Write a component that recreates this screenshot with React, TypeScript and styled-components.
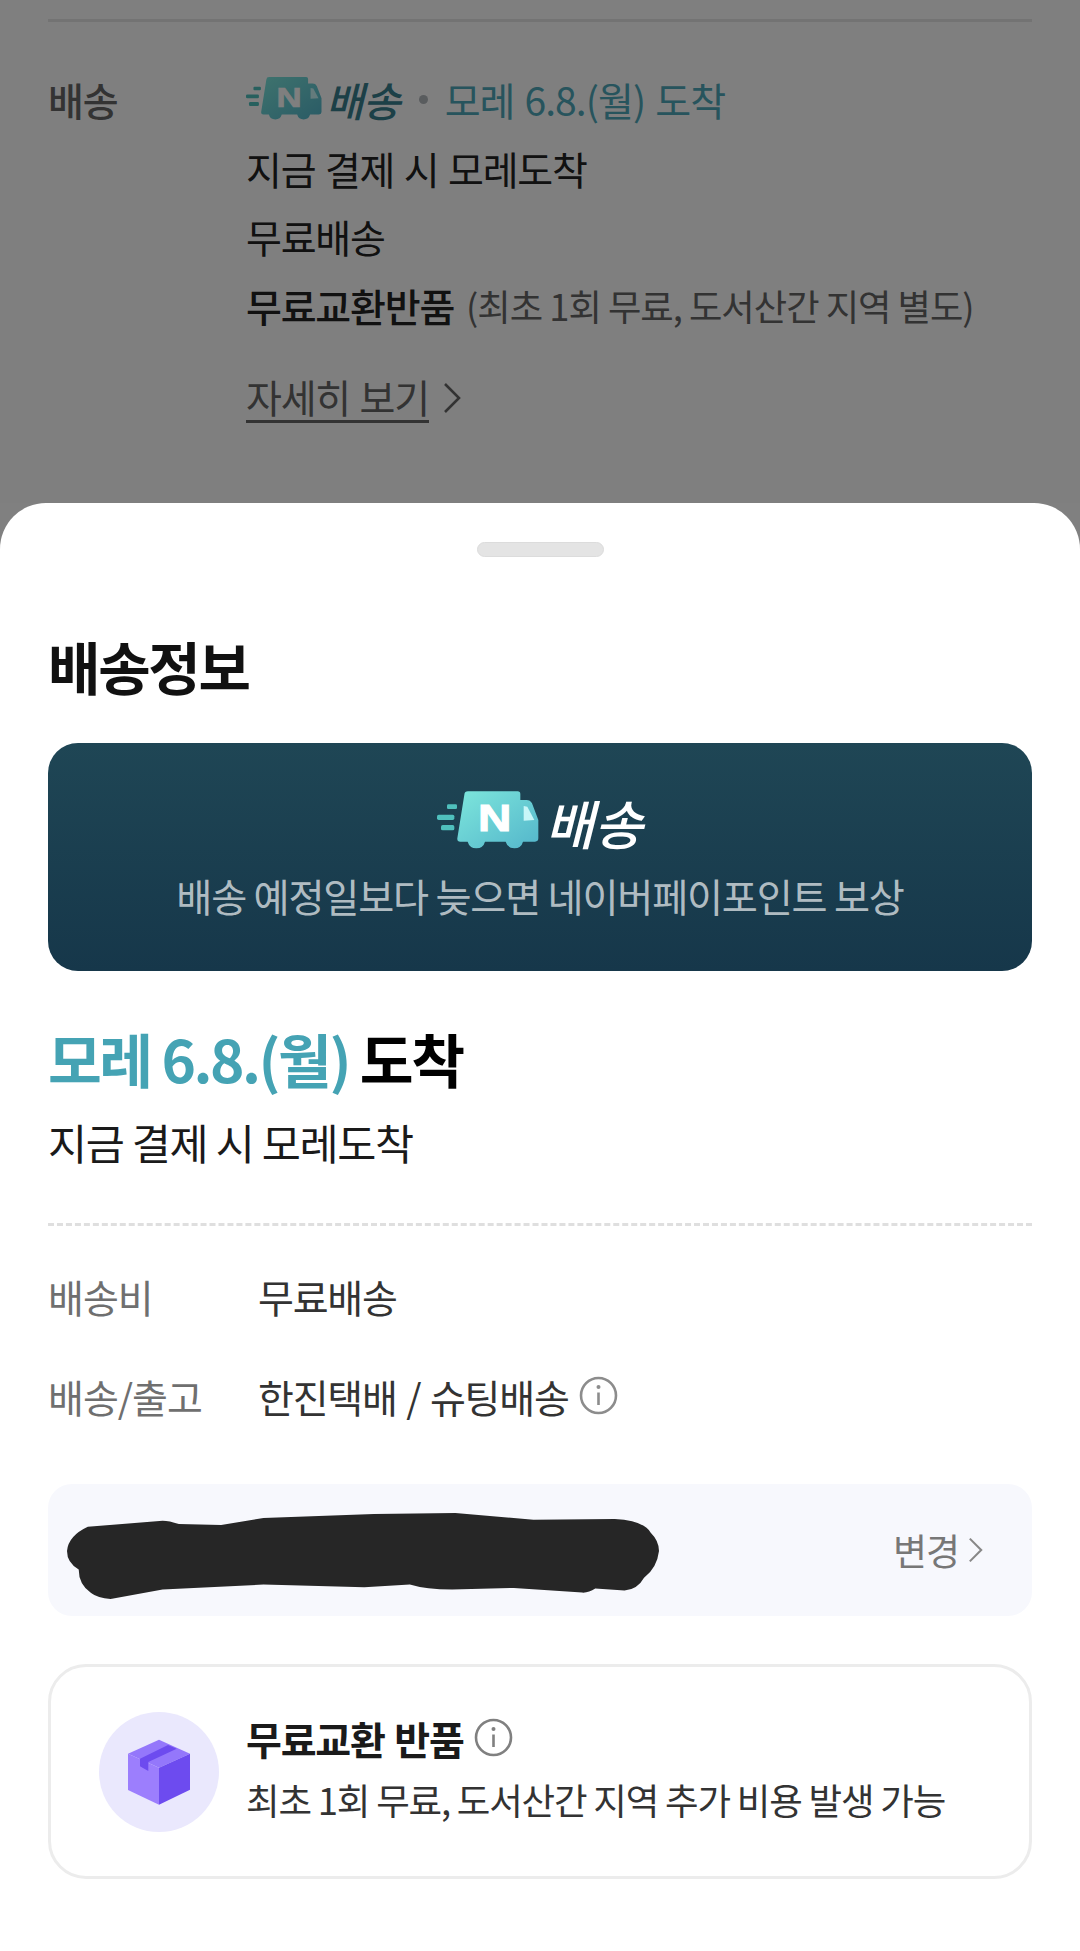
import { createGlobalStyle, styled } from "styled-components";

const Global = createGlobalStyle`
  html, body {
    margin: 0;
    padding: 0;
    background: #808080;
  }

  * {
    box-sizing: border-box;
  }

  body {
    font-family: "Noto Sans CJK KR", "Noto Sans", sans-serif;
  }
`;

const Page = styled.div`
  width: 1080px;
  height: 1951px;
  overflow: hidden;
  background: #808080;
`;

const Behind = styled.section`
  position: relative;
  height: 503px;
  margin-bottom: -46px;
  padding: 19px 48px 0;
  background: #fff;

  &::after {
    content: "";
    position: absolute;
    inset: 0;
    background: rgba(0, 0, 0, 0.5);
  }
`;

const TopRule = styled.div`
  height: 3px;
  background: #e6e6e6;
`;

const InfoRow = styled.div`
  display: grid;
  grid-template-columns: 198px 1fr;
  padding-top: 43px;
`;

const RowLabel = styled.div`
  font-size: 39px;
  line-height: 68.6px;
  font-weight: 500;
  letter-spacing: -1.2px;
  color: #666;
`;

const Line = styled.div<{ $tone?: string; $tight?: boolean }>`
  display: flex;
  align-items: center;
  height: 68.6px;
  font-size: 39px;
  letter-spacing: ${(p) => (p.$tight ? "-0.9px" : "-1.2px")};
  word-spacing: 2px;
  white-space: nowrap;
  color: ${(p) => p.$tone ?? "#222"};
`;

const LogoWord = styled.span`
  margin-left: 4px;
  font-size: 41px;
  font-style: italic;
  font-weight: 500;
  color: #38808f;
`;

const Dot = styled.span`
  width: 9px;
  height: 9px;
  margin: 0 17px 0 19px;
  border-radius: 50%;
  background: #b3b8bd;
`;

const Strong = styled.span`
  font-weight: 500;
`;

const Note = styled.span`
  margin-left: 12px;
  font-size: 36.3px;
  letter-spacing: -1px;
  word-spacing: 0;
  color: #666;
`;

const DetailLink = styled.div`
  display: flex;
  align-items: center;
  gap: 14px;
  margin-top: 34px;
  font-size: 39px;
  letter-spacing: -1.2px;
  word-spacing: 2px;
  color: #666;
`;

const Underlined = styled.span`
  line-height: 47px;
  border-bottom: 3px solid #666;
`;

const Sheet = styled.section`
  position: relative;
  z-index: 1;
  height: 1448px;
  margin-top: 46px;
  padding: 39px 48px 0;
  background: #fff;
  border-radius: 46px 46px 0 0;
`;

const Handle = styled.div`
  width: 127px;
  height: 15px;
  margin: 0 auto;
  border: 1px solid #dcdcdc;
  border-radius: 8px;
  background: #e4e4e4;
`;

const Title = styled.h1`
  margin: 70px 0 0;
  font-size: 57px;
  line-height: 76px;
  font-weight: 700;
  letter-spacing: -2.3px;
  color: #111;
`;

const Banner = styled.div`
  display: flex;
  flex-direction: column;
  align-items: center;
  height: 228px;
  margin-top: 40px;
  padding-top: 48px;
  border-radius: 30px;
  background: linear-gradient(180deg, #1f4655 0%, #16374a 100%);
`;

const BannerLogo = styled.div`
  display: flex;
  align-items: center;
  gap: 6px;
  height: 62px;
`;

const BannerWord = styled.span`
  font-size: 53px;
  line-height: 62px;
  font-style: italic;
  font-weight: 500;
  color: #fff;
`;

const BannerText = styled.div`
  margin-top: 16px;
  font-size: 39.2px;
  line-height: 52px;
  letter-spacing: -1.2px;
  color: rgba(255, 255, 255, 0.68);
`;

const Arrival = styled.div`
  margin-top: 47px;
  font-size: 58.5px;
  line-height: 80px;
  font-weight: 700;
  letter-spacing: -2.5px;
  color: #000;
`;

const ArrivalDate = styled.span`
  color: #45a3b4;
`;

const ArrivalNote = styled.div`
  margin-top: 15px;
  font-size: 42.5px;
  line-height: 58px;
  letter-spacing: -1.3px;
  color: #1a1a1a;
`;

const Dashed = styled.div`
  margin-top: 52px;
  border-top: 3px dashed #dfdfdf;
`;

const Specs = styled.dl`
  display: grid;
  grid-template-columns: 211px 1fr;
  grid-auto-rows: 100px;
  margin: 20px 0 0;
  align-items: center;
`;

const SpecName = styled.dt`
  font-size: 39px;
  letter-spacing: -1px;
  color: #6f6f6f;
`;

const SpecValue = styled.dd`
  display: flex;
  align-items: center;
  gap: 10px;
  margin: -1px 0 0 -1px;
  font-size: 39px;
  letter-spacing: -1.2px;
  word-spacing: 2px;
  color: #333;
`;

const Address = styled.div`
  display: flex;
  align-items: center;
  justify-content: space-between;
  height: 132px;
  margin-top: 38px;
  padding: 0 49px 0 19px;
  border-radius: 24px;
  background: #f7f8fd;
`;

const ScribbleMark = styled.svg`
  display: block;
  margin-top: 12px;
`;

const Change = styled.div`
  display: flex;
  align-items: center;
  gap: 9px;
  font-size: 37px;
  letter-spacing: -1px;
  color: #777;
`;

const ReturnCard = styled.div`
  display: flex;
  align-items: center;
  gap: 27px;
  height: 215px;
  margin-top: 48px;
  padding-left: 48px;
  border: 3px solid #ececec;
  border-radius: 38px;
`;

const ReturnBody = styled.div`
  padding-bottom: 7px;
`;

const ReturnTitle = styled.div`
  display: flex;
  align-items: center;
  gap: 10px;
  font-size: 39px;
  line-height: 54px;
  font-weight: 700;
  letter-spacing: -1.2px;
  word-spacing: 2px;
  color: #1a1a1a;
`;

const ReturnText = styled.div`
  margin-top: 9px;
  font-size: 36.5px;
  line-height: 52px;
  letter-spacing: -1.2px;
  color: #333;
`;

function Truck({ id, width }: { id: string; width: number }) {
  return (
    <svg width={width} viewBox="108 60 306 190" style={{ display: "block", flex: "none" }}>
      <defs>
        <linearGradient id={id} x1="0" y1="0" x2="1" y2="1">
          <stop offset="0" stopColor="#7de6dc" />
          <stop offset="1" stopColor="#54b6cb" />
        </linearGradient>
      </defs>
      <rect x="138" y="103" width="30" height="14" rx="4" fill="#4fc0bd" />
      <rect x="108" y="134" width="52" height="16" rx="5" fill="#4fc0bd" />
      <rect x="120" y="165" width="40" height="16" rx="5" fill="#4fc0bd" />
      <path
        d="M190 74Q191 64 201 64L350 64Q358 64 358 72L358 90L376 90Q388 90 393 100L412 150L412 205Q412 215 402 215L366 215A27 27 0 0 1 314 215L252 215A27 27 0 0 1 200 215L178 215Q168 215 169 205Z"
        fill={`url(#${id})`}
      />
      <path d="M368 108L379 110L400 150L368 152Z" fill="#c8f6f8" />
      <text
        x="281"
        y="184"
        textAnchor="middle"
        fontFamily="'Liberation Sans', sans-serif"
        fontWeight="700"
        fontSize="110"
        textLength="100"
        lengthAdjust="spacingAndGlyphs"
        stroke="#fff"
        strokeWidth="3"
        fill="#fff"
      >
        N
      </text>
    </svg>
  );
}

function InfoIcon({ color }: { color: string }) {
  return (
    <svg width="39" height="39" viewBox="0 0 39 39" fill="none" style={{ flex: "none" }}>
      <circle cx="19.5" cy="19.5" r="17.5" stroke={color} strokeWidth="2.6" />
      <circle cx="19.5" cy="11" r="2" fill={color} />
      <line x1="19.5" y1="16.5" x2="19.5" y2="29" stroke={color} strokeWidth="2.6" />
    </svg>
  );
}

function Chevron({ width, height, color }: { width: number; height: number; color: string }) {
  return (
    <svg width={width} height={height} viewBox="0 0 18 32" fill="none" style={{ flex: "none" }}>
      <polyline points="2,2 16,16 2,30" stroke={color} strokeWidth="2.6" />
    </svg>
  );
}

function Scribble() {
  return (
    <ScribbleMark width="592" height="86" viewBox="58 157 910 256" preserveAspectRatio="none">
      <path
        d="M58 270Q60 225 90 198L205 180Q215 180 230 190L295 193L360 172L530 160L655 157L775 177L900 175Q945 180 955 215Q968 240 968 270Q965 320 945 350Q935 385 915 388L870 382Q860 395 850 394L745 380L650 385Q610 385 585 370L515 378L360 370L205 385L125 413Q105 410 95 395Q76 370 76 325Q58 305 58 270Z"
        fill="#262626"
      />
    </ScribbleMark>
  );
}

function BoxIcon() {
  return (
    <svg width="120" height="120" viewBox="0 0 120 120" style={{ display: "block", flex: "none" }}>
      <circle cx="60" cy="60" r="60" fill="#eae8fd" />
      <path d="M60 27.7L91 41.7L60 55.7L29 41.7Z" fill="#9477fb" />
      <path d="M29 41.7L60 55.7L60 92.7L29 78Z" fill="#9c7efd" />
      <path d="M91 41.7L60 55.7L60 92.7L91 77.7Z" fill="#6d4bef" />
      <path d="M41 46.7L69 33L77.7 36.7L49.3 50L49.3 59L44 56L41 54.3Z" fill="#6d4bef" />
    </svg>
  );
}

export default function App() {
  return (
    <Page>
      <Global />

      <Behind>
        <TopRule />

        <InfoRow>
          <RowLabel>배송</RowLabel>

          <div>
            <Line $tone="#4fa9ba" $tight>
              <Truck id="truck-small" width={76} />
              <LogoWord>배송</LogoWord>
              <Dot />
              모레 6.8.(월) 도착
            </Line>
            <Line>지금 결제 시 모레도착</Line>
            <Line>무료배송</Line>
            <Line>
              <Strong>무료교환반품</Strong>
              <Note>(최초 1회 무료, 도서산간 지역 별도)</Note>
            </Line>

            <DetailLink>
              <Underlined>자세히 보기</Underlined>
              <Chevron width={18} height={32} color="#666" />
            </DetailLink>
          </div>
        </InfoRow>
      </Behind>

      <Sheet>
        <Handle />

        <Title>배송정보</Title>

        <Banner>
          <BannerLogo>
            <Truck id="truck-large" width={102} />
            <BannerWord>배송</BannerWord>
          </BannerLogo>
          <BannerText>배송 예정일보다 늦으면 네이버페이포인트 보상</BannerText>
        </Banner>

        <Arrival>
          <ArrivalDate>모레 6.8.(월)</ArrivalDate> 도착
        </Arrival>
        <ArrivalNote>지금 결제 시 모레도착</ArrivalNote>

        <Dashed />

        <Specs>
          <SpecName>배송비</SpecName>
          <SpecValue>무료배송</SpecValue>
          <SpecName>배송/출고</SpecName>
          <SpecValue>
            한진택배 / 슈팅배송
            <InfoIcon color="#8c8c8c" />
          </SpecValue>
        </Specs>

        <Address>
          <Scribble />
          <Change>
            변경
            <Chevron width={15} height={26} color="#888" />
          </Change>
        </Address>

        <ReturnCard>
          <BoxIcon />
          <ReturnBody>
            <ReturnTitle>
              무료교환 반품
              <InfoIcon color="#808080" />
            </ReturnTitle>
            <ReturnText>최초 1회 무료, 도서산간 지역 추가 비용 발생 가능</ReturnText>
          </ReturnBody>
        </ReturnCard>
      </Sheet>
    </Page>
  );
}
